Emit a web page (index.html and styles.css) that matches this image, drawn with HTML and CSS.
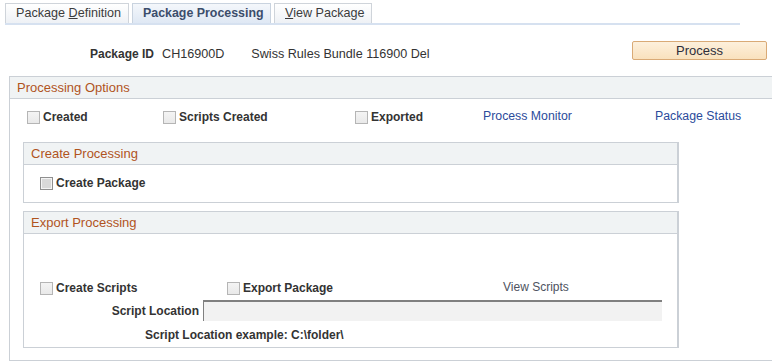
FILE: index.html
```html
<!DOCTYPE html>
<html>
<head>
<meta charset="utf-8">
<link rel="stylesheet" href="styles.css">
</head>
<body>
<div class="tabs">
  <div class="tab t1">Package <u>D</u>efinition</div>
  <div class="tab t2 active">Package Processing</div>
  <div class="tab t3"><u>V</u>iew Package</div>
</div>

<div class="idrow">
  <span class="lbl idlbl">Package ID</span>
  <span class="val idval">CH16900D</span>
  <span class="val descr">Swiss Rules Bundle 116900 Del</span>
  <button class="btn">Process</button>
</div>

<div class="box outer">
  <div class="hdr">Processing Options</div>
  <div class="optrow">
    <label class="cb"><span class="box13"></span><span class="lbl">Created</span></label>
    <label class="cb"><span class="box13"></span><span class="lbl">Scripts Created</span></label>
    <label class="cb"><span class="box13"></span><span class="lbl">Exported</span></label>
    <a class="link">Process Monitor</a>
    <a class="link">Package Status</a>
  </div>

  <div class="box sub create">
    <div class="hdr">Create Processing</div>
    <div class="createrow">
      <label class="cb"><span class="box13 dis"></span><span class="lbl">Create Package</span></label>
    </div>
  </div>

  <div class="box sub export">
    <div class="hdr">Export Processing</div>
    <div class="exprow">
      <label class="cb"><span class="box13"></span><span class="lbl">Create Scripts</span></label>
      <label class="cb"><span class="box13"></span><span class="lbl">Export Package</span></label>
      <span class="viewscripts">View Scripts</span>
    </div>
    <div class="locrow">
      <span class="lbl loclbl">Script Location</span>
      <span class="input"></span>
    </div>
    <div class="examplerow">
      <span class="lbl">Script Location example: C:\folder\</span>
    </div>
  </div>
</div>
</body>
</html>
```
FILE: styles.css
```css
* { box-sizing: border-box; }
body {
  margin: 0;
  font-family: "Liberation Sans", Arial, sans-serif;
  font-size: 12px;
  color: #333;
  background: #fff;
  width: 772px;
  height: 361px;
  overflow: hidden;
}
.tabs {
  display: flex;
  gap: 3px;
  margin: 3px 0 0 5px;
  width: 735px;
  border-bottom: 2px solid #d6e1f0;
  height: 22px;
}
.tab {
  height: 20px;
  padding: 0 0 0 10px;
  border: 1px solid #cfd4da;
  border-bottom: none;
  background: linear-gradient(#ffffff, #eef1f5);
  font-size: 12.6px;
  line-height: 19px;
  color: #3c3c3c;
  white-space: nowrap;
}
.t1 { width: 124px; }
.t2 { width: 139px; }
.t3 { width: 98px; }
.tab.active {
  font-weight: bold;
  font-size: 12.4px;
  color: #3b4d6b;
  background: linear-gradient(#f4f7fb, #dfe8f4);
  border-color: #c9d3df;
}
.tab u { text-decoration: underline; }

.idrow {
  display: flex;
  align-items: flex-start;
  margin-top: 16px;
  height: 19px;
}
.lbl { font-weight: bold; color: #333; }
.idlbl { margin-left: 90px; padding-top: 6px; line-height: 14px; }
.val { padding-top: 6px; line-height: 14px; color: #333; font-size: 12.6px; }
.idval { margin-left: 8px; }
.descr { margin-left: 27px; }
.btn {
  margin-left: auto;
  margin-right: 5px;
  width: 135px;
  height: 19px;
  padding: 0;
  border: 1px solid #d9aa76;
  border-radius: 2px;
  background: linear-gradient(#fdf0dc, #f9e1bd);
  font-family: "Liberation Sans", Arial, sans-serif;
  font-size: 13px;
  color: #2e2e3a;
  line-height: 16px;
}

.box {
  border: 1px solid #cbd0d6;
  background: #fff;
}
.hdr {
  height: 22px;
  background: #f0f3f4;
  border-bottom: 1px solid #cbd0d6;
  color: #b0541e;
  font-size: 13px;
  line-height: 21px;
  padding-left: 7px;
}
.outer {
  margin: 16px 0 0 9px;
  width: 770px;
  height: 285px;
  border-right: none;
}
.optrow {
  display: grid;
  grid-template-columns: 136px 192px 128px 172px auto;
  margin-top: 10px;
  padding-left: 17px;
  height: 16px;
  align-items: center;
}
.cb {
  display: flex;
  align-items: center;
  gap: 3px;
  line-height: 16px;
}
.box13 {
  display: inline-block;
  width: 13px;
  height: 13px;
  border: 1px solid #b5b5b5;
  background: linear-gradient(#f4f4f4, #e9e9e9);
}
.box13.dis {
  border-color: #8f8f8f;
  background: #d9d9d9;
  box-shadow: inset 0 0 0 1px #f4f4f4;
}
.link {
  color: #2b4b9b;
  font-size: 12.3px;
  line-height: 14px;
  margin-top: -2px;
}
.sub {
  margin-left: 13px;
  width: 656px;
  border-right-width: 2px;
}
.create {
  margin-top: 17px;
  height: 61px;
}
.createrow {
  padding: 10px 0 0 16px;
}
.export {
  margin-top: 8px;
  height: 137px;
}
.exprow {
  display: grid;
  grid-template-columns: 187px 276px auto;
  padding: 46px 0 0 16px;
  height: 62px;
  align-items: center;
}
.viewscripts {
  color: #4e5260;
  line-height: 14px;
  margin-top: -2px;
}
.locrow {
  display: flex;
  align-items: center;
  margin-top: 4px;
  height: 21px;
}
.loclbl {
  width: 179px;
  text-align: right;
  padding-right: 4px;
}
.input {
  width: 459px;
  height: 21px;
  background: #f2f2f2;
  border-top: 2px solid #808080;
  border-left: 1px solid #808080;
}
.examplerow {
  margin-top: 7px;
  padding-left: 121px;
  line-height: 14px;
}
```
